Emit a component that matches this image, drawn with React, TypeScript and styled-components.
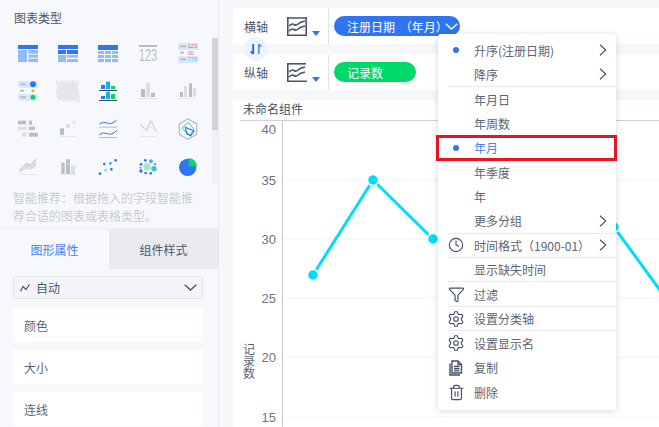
import React from 'react';
import styled, { createGlobalStyle } from 'styled-components';
import { Clock, Funnel, Settings, Trash2 } from 'lucide-react';

const Global = createGlobalStyle`
  html, body { margin: 0; padding: 0; width: 659px; height: 427px; overflow: hidden; background: #f6f7fa; }
  body { font-family: "Noto Sans CJK SC", "Noto Sans", sans-serif; font-size: 12px; color: #5b6478; }
`;
const Page = styled.div`display: flex; width: 659px; height: 427px; overflow: hidden;`;
const Sidebar = styled.aside`width: 218px; flex: none; border-right: 1px solid #e7e9ed; background: #f7f8fb; display: flex; flex-direction: column; overflow: hidden;`;
const SideTitle = styled.div`margin: 10px 0 8px 14px; line-height: 16px; color: #4c5568; flex: none;`;
const TypeArea = styled.div`display: flex; height: 152px; flex: none;`;
const TypeGrid = styled.div`margin-left: 8px; width: 200px; display: grid; grid-template-columns: repeat(5, 40px); grid-auto-rows: 38px;`;
const Track = styled.div`margin: 4px 0 0 4px; width: 6px; height: 145px; background: #f0f1f4;`;
const Thumb = styled.div`height: 92px; background: #d0d3d9;`;
const Hint = styled.p`margin: 3px 0 0 13px; width: 182px; line-height: 18px; color: #c9ccd2; flex: none;`;
const Tabs = styled.div`display: flex; height: 41px; margin-top: 3px; border-top: 1px solid #eceef1; box-sizing: border-box; flex: none;`;
const Tab = styled.div<{ $active?: boolean }>`
  flex: 1; display: flex; align-items: center; justify-content: center;
  color: ${p => (p.$active ? '#3f81f4' : '#4f586b')};
  background: ${p => (p.$active ? 'transparent' : '#e8eaee')};
`;
const SelectBox = styled.div`margin: 7px 15px 9px 13px; height: 23px; flex: none; box-sizing: border-box; border: 1px solid #e3e5ea; border-radius: 2px; background: #f4f5f8; display: flex; align-items: center; padding: 0 5px 0 6px; color: #4f586b;`;
const SelectText = styled.span`flex: 1; margin-left: 6px;`;
const PropCard = styled.div`margin: 0 15px 8px 13px; height: 34px; flex: none; background: #fff; display: flex; align-items: center; padding-left: 11px; color: #5b6478;`;

const Main = styled.main`position: relative; flex: 1; padding: 8px 0 0 14px; min-width: 0;`;
const AxisRow = styled.div`height: 36px; margin-bottom: 10px; background: #fff; display: flex; align-items: center; padding-left: 11px;`;
const AxisLabel = styled.span`width: 43px; color: #4f586b;`;
const AxisPicker = styled.div`width: 41px; height: 35px; border-right: 1px solid #dfe1e6; display: flex; align-items: center; margin-right: 5px;`;
const Pill = styled.div<{ $color: string; $width: number }>`
  height: 20px; width: ${p => p.$width}px; box-sizing: border-box; border-radius: 10px; background: ${p => p.$color};
  color: #fff; display: flex; align-items: center; padding-left: 13px; white-space: nowrap;
`;
const PillText = styled.span`width: 98px; flex: none; word-spacing: 2px;`;
const Swap = styled.div`position: absolute; left: 25px; top: 37px; width: 24px; height: 24px; border-radius: 50%; background: #edf3fb; display: flex; align-items: center; justify-content: center;`;
const ChartCard = styled.section`background: #fff; height: 327px; overflow: hidden;`;
const ChartTitle = styled.div`height: 21px; line-height: 18px; margin-left: 7px; padding-left: 3px; box-sizing: border-box; border-bottom: 1px solid #cfd1d5; color: #464f61;`;
const ChartSvg = styled.svg`display: block;`;
const AxisName = styled.text`writing-mode: vertical-rl; letter-spacing: 0.4px; font-size: 12px; fill: #5b6478; font-family: "Noto Sans CJK SC", sans-serif;`;

const Menu = styled.div`position: absolute; left: 219px; top: 34px; width: 178px; height: 376px; box-sizing: border-box; padding-top: 4px; background: #fff; border-radius: 3px; box-shadow: 0 1px 6px rgba(60, 70, 90, 0.22);`;
const Row = styled.div<{ $divider?: boolean; $active?: boolean }>`
  position: relative; height: 24.45px; box-sizing: border-box; display: flex; align-items: center; margin-left: 10px;
  color: ${p => (p.$active ? '#3f81f4' : '#5b6478')};
  ${p => (p.$divider ? 'border-bottom: 1px solid #e9ebef;' : '')}
`;
const Lead = styled.span`width: 20px; flex: none; margin: 0 8px 0 -2px; display: flex; align-items: center; justify-content: center; color: #465068;`;
const Dot = styled.i`width: 6px; height: 6px; border-radius: 50%; background: #2f74f0; display: block;`;
const Label = styled.span`flex: 1; white-space: nowrap;`;
const Arrow = styled.svg`margin-right: 9px; flex: none;`;
const Highlight = styled.div`position: absolute; left: -12px; right: -1px; top: -1px; bottom: -1px; border: 3px solid #e8141f; pointer-events: none;`;

const Chevron = () => (
  <Arrow width="8" height="12" viewBox="0 0 8 12"><path d="M1 .8 6.8 6 1 11.2" fill="none" stroke="#4f586b" strokeWidth="1.2" /></Arrow>
);

const B = '#2f74f0', L = '#93b9f7', G = '#b9bdc8', LG = '#dcdee3', GR = '#00d868', C = '#10b5e8';
const R = ({ x, y, w, h, f }: { x: number; y: number; w: number; h: number; f: string }) => <rect x={x} y={y} width={w} height={h} fill={f} />;

const icons: React.ReactNode[] = [
  <><R x={54} y={135} w={60} h={12} f={B} /><R x={54} y={150} w={27} h={36} f={L} /><R x={85} y={150} w={29} h={11} f={L} /><R x={85} y={164} w={29} h={9} f={L} /><R x={85} y={176} w={29} h={10} f={L} /></>,
  <><R x={174} y={135} w={60} h={12} f={B} /><R x={174} y={150} w={24} h={12} f={B} /><R x={201} y={150} w={33} h={12} f={B} /><R x={174} y={165} w={24} h={21} f={L} /><R x={201} y={165} w={33} h={8} f={L} /><R x={201} y={177} w={33} h={9} f={L} /></>,
  <><R x={294} y={135} w={60} h={15} f={B} />{[153, 165, 177].map(y => [294, 315, 336].map(x => <R key={`${x}${y}`} x={x} y={y} w={18} h={9} f={L} />))}</>,
  <><R x={417} y={135} w={54} h={6} f={G} /><text x={417} y={184} fontSize={50} textLength={54} lengthAdjust="spacingAndGlyphs" fill={G} fontFamily="Liberation Sans">123</text></>,
  <><R x={534} y={129} w={60} h={21} f="#dbe8fb" /><R x={534} y={168} w={60} h={21} f="#dbe8fb" /><R x={540} y={136} w={18} h={6} f={G} /><R x={540} y={155} w={12} h={6} f={G} /><R x={540} y={175} w={18} h={6} f={G} /><text x={563} y={145} fontSize={17} fill="#f26d6d" fontFamily="Liberation Sans">123</text><text x={563} y={164} fontSize={17} fill="#f26d6d" fontFamily="Liberation Sans">90</text><text x={563} y={184} fontSize={17} fill="#3fd0ef" fontFamily="Liberation Sans">778</text></>,
  <><R x={54} y={243} w={60} h={20} f="#dbe8fb" /><R x={54} y={282} w={60} h={20} f="#dbe8fb" /><R x={60} y={250} w={18} h={6} f={G} /><R x={60} y={269} w={12} h={6} f={G} /><R x={60} y={289} w={18} h={6} f={G} /><circle cx={99} cy={253} r={9} fill={B} /><circle cx={99} cy={272} r={4.5} fill="#f9b716" /><circle cx={99} cy={292} r={7.5} fill={GR} /></>,
  <><defs><filter id="mapNoise"><feTurbulence type="fractalNoise" baseFrequency="0.12" numOctaves="3" seed="4" /><feColorMatrix values="0 0 0 0 0.78 0 0 0 0 0.79 0 0 0 0 0.81 0 0 0 2.4 -0.8" /></filter></defs><R x={174} y={246} w={60} h={54} f="#e6e7ea" /><rect x={174} y={246} width={60} height={54} filter="url(#mapNoise)" /></>,
  <><R x={303} y={255} w={12} h={12} f={B} /><R x={318} y={245} w={12} h={22} f={C} /><R x={333} y={258} w={12} h={9} f={GR} /><R x={297} y={270} w={54} h={3} f="#3f4a5e" /><R x={303} y={288} w={12} h={9} f={B} /><R x={318} y={275} w={12} h={22} f={C} /><R x={333} y={282} w={12} h={15} f={GR} /><R x={297} y={300} w={54} h={3} f="#3f4a5e" /></>,
  <><R x={423} y={267} w={12} h={24} f={G} /><R x={438} y={250} w={12} h={41} f={LG} /><R x={453} y={278} w={12} h={13} f={G} /><R x={417} y={294} w={54} h={2} f={LG} /></>,
  <><R x={540} y={276} w={9} h={15} f={G} /><R x={552} y={258} w={9} h={33} f={LG} /><R x={567} y={250} w={9} h={41} f={G} /><R x={579} y={264} w={9} h={27} f={LG} /><R x={537} y={294} w={54} h={2} f={LG} /></>,
  <><R x={54} y={362} w={24} h={11} f={G} /><R x={54} y={380} w={24} h={10} f={LG} /><R x={66} y={398} w={12} h={12} f={LG} /><R x={80} y={360} w={2} h={52} f={LG} /><R x={87} y={362} w={9} h={12} f={G} /><R x={87} y={380} w={18} h={10} f={G} /><R x={87} y={398} w={27} h={12} f={G} /></>,
  <><R x={180} y={385} w={12} h={20} f={G} /><R x={198} y={372} w={12} h={12} f={LG} /><R x={216} y={362} w={12} h={10} f="#e8e9ec" /><R x={177} y={408} w={54} h={2} f={LG} /></>,
  <><path d="M298 372q12-9 24-3t28-9" fill="none" stroke={B} strokeWidth={3} /><R x={297} y={380} w={54} h={3} f={G} /><path d="M298 404q12-9 24-3t28-9" fill="none" stroke={B} strokeWidth={3} /><R x={297} y={411} w={54} h={3} f={G} /></>,
  <><path d="M420 372 440 392 452 362 470 395" fill="none" stroke={G} strokeWidth={2.5} /><path d="M420 400 442 378 470 390" fill="none" stroke={LG} strokeWidth={2.5} /><R x={417} y={408} w={54} h={2} f={LG} /></>,
  <><path d="M564 357 590 372V403L564 418 538 403V372Z" fill="none" stroke={G} strokeWidth={4} /><path d="M545 385 565 367 582 388 570 405Z" fill="none" stroke={GR} strokeWidth={2.5} /><path d="M556 382 582 393 572 407 561 402Z" fill="none" stroke={B} strokeWidth={3.5} /></>,
  <><path d="M58 510 80 490 92 495 108 476V500L92 510 80 506 58 518Z" fill={LG} /><path d="M58 510 80 490 92 495 108 476" fill="none" stroke={G} strokeWidth={2.5} /><R x={57} y={522} w={54} h={2} f={LG} /></>,
  <><R x={184} y={488} w={10} h={34} f={G} /><R x={198} y={478} w={12} h={44} f={G} /><R x={213} y={498} w={12} h={24} f={LG} /><path d="M178 510 204 490 232 498" fill="none" stroke="#e4e5e9" strokeWidth={2} /><R x={177} y={523} w={54} h={1.5} f={LG} /></>,
  <>{[[300, 521, B], [313, 492, B], [331, 490, C], [347, 481, B], [317, 511, '#7fdcc6'], [334, 508, B]].map(([x, y, f]) => <circle key={`${x}`} cx={x as number} cy={y as number} r={4} fill={f as string} />)}</>,
  <>{[[441, 500, 11, '#a4e8c8'], [462, 506, 8, '#44c0cc'], [453, 484, 6, '#4ab6d4'], [436, 481, 4, B], [423, 493, 4, B], [423, 513, 5, B], [437, 519, 4, B], [452, 520, 4, B], [421, 503, 2.5, B], [465, 493, 3, B]].map(([x, y, r, f]) => <circle key={`${x}${y}`} cx={x as number} cy={y as number} r={r as number} fill={f as string} />)}</>,
  <><circle cx={563} cy={502} r={26} fill={B} /><path d="M566 474A26 26 0 0 1 591 499H566Z" fill={GR} /><path d="M572 484 584 495" stroke="#7fe8b0" strokeWidth={2} strokeDasharray="3 3" /></>,
];

const FileIcon = () => (
  <svg width="16" height="16" viewBox="0 0 16 16" fill="none" stroke="currentColor" strokeWidth="1.4">
    <path d="M4 1h6l3.5 3.5V13H4z" /><path d="M10 1v3.5h3.5M6 6.5h5.5M6 8.7h5.5M6 10.9h5.5" /><path d="M2 3.5V15h10" />
  </svg>
);

const WaveIcon = ({ frame }: { frame?: boolean }) => (
  <svg width="20" height="19" viewBox="0 0 20 19" fill="none" stroke="#4a5468" strokeWidth="1.6">
    <path d="M.8 0v18.2H20" />
    {frame ? <path d="M19.2 0v18M0 1h20" /> : <path d="M0 .8h19" />}
    <path d="M2 9q3-3 5-1.5t4-.5 7-3" /><path d="M2 14q3-3 5-1.5t4-.5 7-3" />
  </svg>
);
const Caret = () => (
  <svg width="8" height="5" viewBox="0 0 8 5" style={{ margin: '15px 0 0 5px' }}><path d="M0 0h8L4 5z" fill="#2f74f0" /></svg>
);

const points = [[313, 275], [373, 180], [433, 239], [614, 227]];
const X0 = 233, Y0 = 121;

export default function App() {
  return (
    <Page>
      <Global />
      <Sidebar>
        <SideTitle>图表类型</SideTitle>
        <TypeArea>
          <TypeGrid>
            {icons.map((icon, i) => (
              <svg key={i} width="40" height="38" viewBox={`${24 + (i % 5) * 120} ${102 + Math.floor(i / 5) * 114} 120 114`}>{icon}</svg>
            ))}
          </TypeGrid>
          <Track><Thumb /></Track>
        </TypeArea>
        <Hint>智能推荐：根据拖入的字段智能推荐合适的图表或表格类型。</Hint>
        <Tabs><Tab $active>图形属性</Tab><Tab>组件样式</Tab></Tabs>
        <SelectBox>
          <svg width="10" height="8" viewBox="0 0 10 8" fill="none" stroke="#4f586b" strokeWidth="1.2"><path d="M.5 7.5 3 2.5 6 5.5 9.5.5" /></svg>
          <SelectText>自动</SelectText>
          <svg width="13" height="7" viewBox="0 0 13 7" fill="none" stroke="#4a5468" strokeWidth="1.3"><path d="M.7.7 6.5 6 12.3.7" /></svg>
        </SelectBox>
        <PropCard>颜色</PropCard>
        <PropCard>大小</PropCard>
        <PropCard>连线</PropCard>
      </Sidebar>
      <Main>
        <AxisRow>
          <AxisLabel>横轴</AxisLabel>
          <AxisPicker><WaveIcon frame /><Caret /></AxisPicker>
          <Pill $color="#2f74f0" $width={126}>
            <PillText>注册日期 （年月）</PillText>
            <svg width="13" height="7" viewBox="0 0 13 7" fill="none" stroke="#fff" strokeWidth="1.3"><path d="M.7.7 6.5 6 12.3.7" /></svg>
          </Pill>
        </AxisRow>
        <Swap>
          <svg width="12" height="12" viewBox="0 0 12 12" fill="none" strokeWidth="1.8">
            <path d="M3.2 1v10M3.2 11 .7 8.3" stroke="#2a62cf" /><path d="M8.8 11V1M8.8 1l2.5 2.7" stroke="#5a93f2" />
          </svg>
        </Swap>
        <AxisRow>
          <AxisLabel>纵轴</AxisLabel>
          <AxisPicker><WaveIcon /><Caret /></AxisPicker>
          <Pill $color="#00d868" $width={82}>记录数</Pill>
        </AxisRow>
        <ChartCard>
          <ChartTitle>未命名组件</ChartTitle>
          <ChartSvg width={426} height={306} viewBox={`${X0} ${Y0} 426 306`}>
            {[180, 239, 298, 357, 417].map(y => <line key={y} x1={282} x2={659} y1={y} y2={y} stroke="#f3f4f6" />)}
            <line x1={282.5} x2={282.5} y1={121} y2={427} stroke="#c9cacd" />
            {[['40', 134], ['35', 185], ['30', 244], ['25', 303], ['20', 362], ['15', 422]].map(([t, y]) => (
              <text key={t} x={276} y={y} textAnchor="end" fontSize={13} fill="#6d7384" fontFamily="Liberation Sans">{t}</text>
            ))}
            <AxisName x={249} y={343}>记录数</AxisName>
            <polyline points={`${points.map(p => p.join(',')).join(' ')} 662,293`} fill="none" stroke="#00dcff" strokeWidth={3} />
            {points.map(([x, y]) => <circle key={x} cx={x} cy={y} r={5.5} fill="#00dcff" stroke="#fff" strokeWidth={1.5} />)}
          </ChartSvg>
        </ChartCard>
        <Menu>
          <Row><Lead><Dot /></Lead><Label>升序(注册日期)</Label><Chevron /></Row>
          <Row $divider><Lead /><Label>降序</Label><Chevron /></Row>
          <Row><Lead /><Label>年月日</Label></Row>
          <Row><Lead /><Label>年周数</Label></Row>
          <Row $active><Lead><Dot /></Lead><Label>年月</Label><Highlight /></Row>
          <Row><Lead /><Label>年季度</Label></Row>
          <Row><Lead /><Label>年</Label></Row>
          <Row $divider><Lead /><Label>更多分组</Label><Chevron /></Row>
          <Row $divider><Lead><Clock size={16} strokeWidth={1.7} /></Lead><Label>时间格式（1900-01）</Label><Chevron /></Row>
          <Row $divider><Lead /><Label>显示缺失时间</Label></Row>
          <Row $divider><Lead><Funnel size={17} strokeWidth={1.7} /></Lead><Label>过滤</Label></Row>
          <Row $divider><Lead><Settings size={18} strokeWidth={1.6} /></Lead><Label>设置分类轴</Label></Row>
          <Row><Lead><Settings size={18} strokeWidth={1.6} /></Lead><Label>设置显示名</Label></Row>
          <Row><Lead><FileIcon /></Lead><Label>复制</Label></Row>
          <Row><Lead><Trash2 size={17} strokeWidth={1.7} /></Lead><Label>删除</Label></Row>
        </Menu>
      </Main>
    </Page>
  );
}
